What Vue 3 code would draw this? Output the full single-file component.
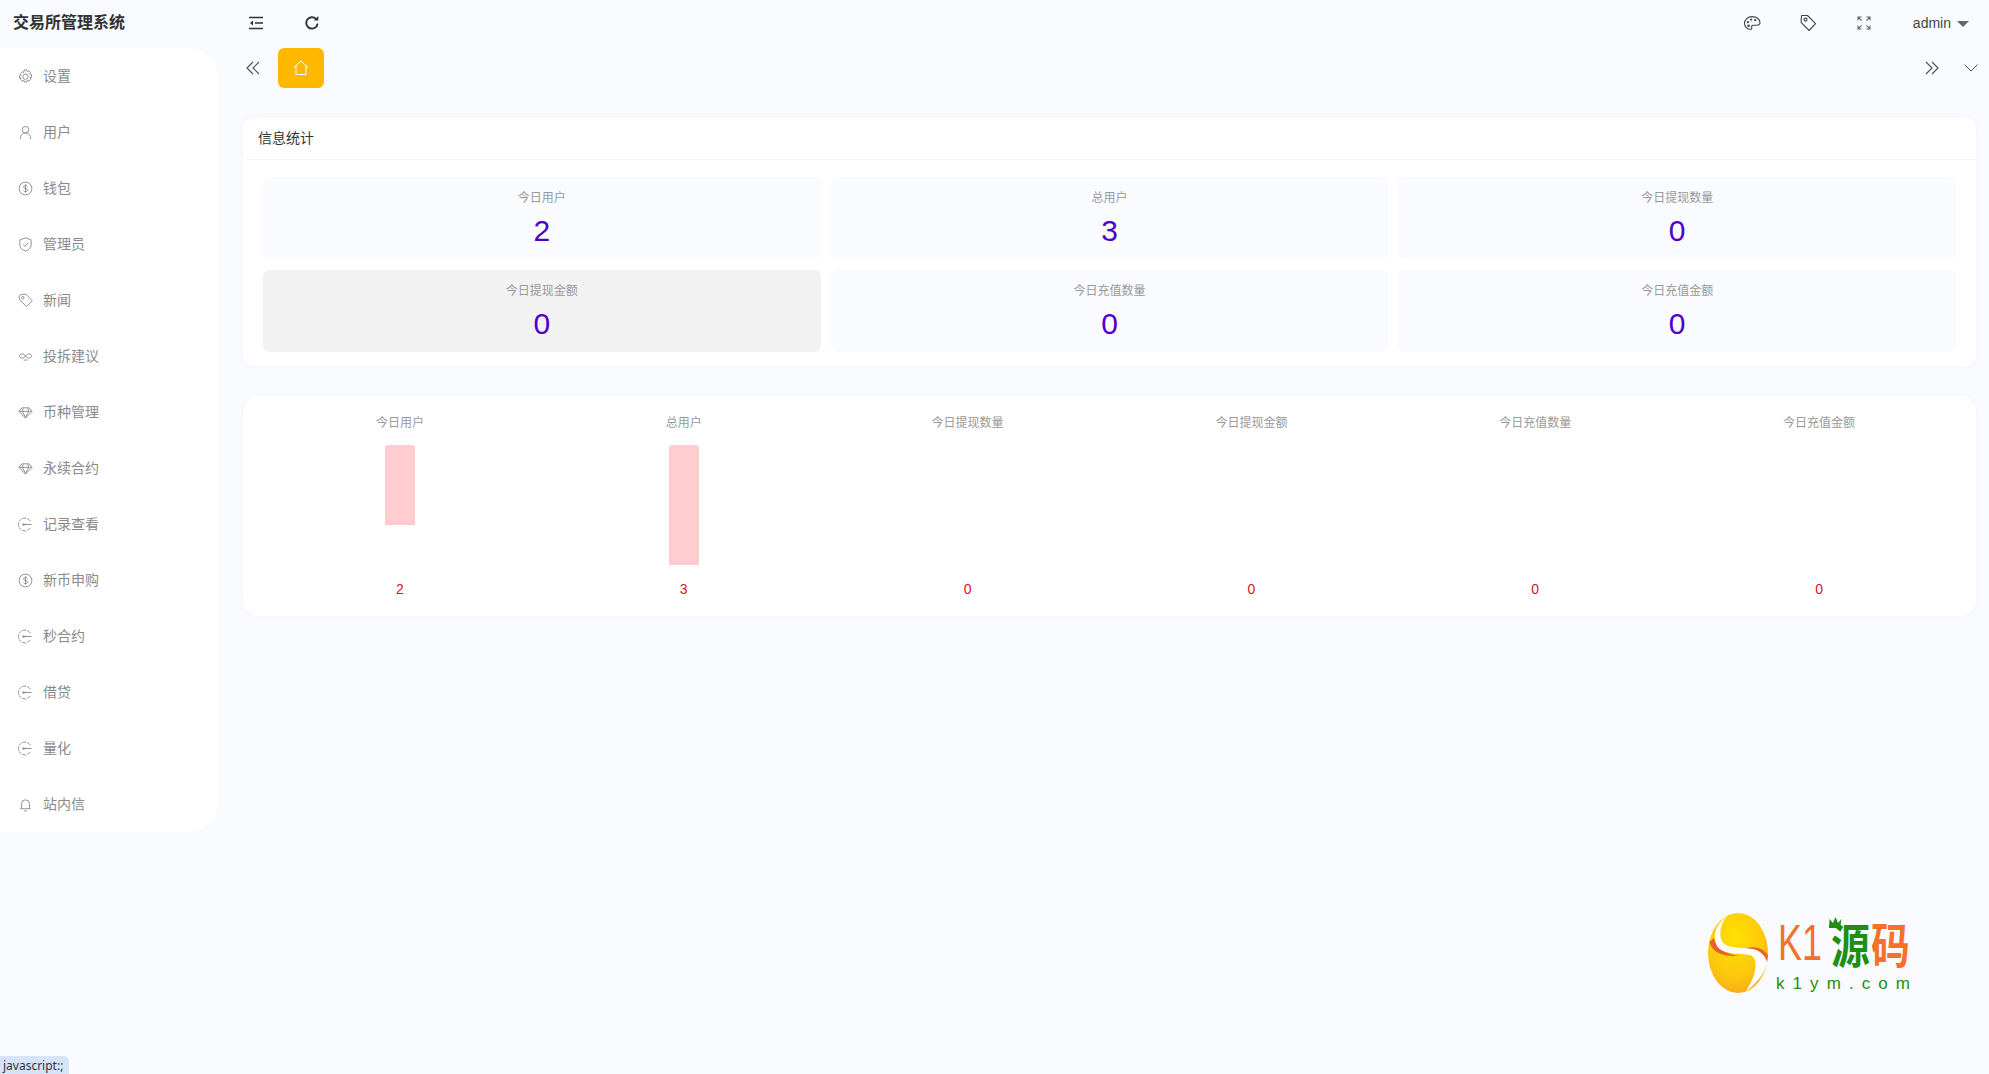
<script setup>
const menu = [
  { name: "设置", icon: "gear" },
  { name: "用户", icon: "user" },
  { name: "钱包", icon: "dollar" },
  { name: "管理员", icon: "shield" },
  { name: "新闻", icon: "tag" },
  { name: "投拆建议", icon: "link" },
  { name: "币种管理", icon: "diamond" },
  { name: "永续合约", icon: "diamond" },
  { name: "记录查看", icon: "login" },
  { name: "新币申购", icon: "dollar" },
  { name: "秒合约", icon: "login" },
  { name: "借贷", icon: "login" },
  { name: "量化", icon: "login" },
  { name: "站内信", icon: "bell" }
];

const tiles = [
  { label: "今日用户", value: 2 },
  { label: "总用户", value: 3 },
  { label: "今日提现数量", value: 0 },
  { label: "今日提现金额", value: 0, active: true },
  { label: "今日充值数量", value: 0 },
  { label: "今日充值金额", value: 0 }
];

// 柱子高度按数值换算，最大值 3 对应 120px
const barHeight = (value) => `${value * 40}px`;
</script>

<template>
  <div class="page">
    <header class="topbar">
      <div class="brand">交易所管理系统</div>
      <div class="top-left">
        <span class="top-btn">
          <svg width="16" height="16" viewBox="0 0 16 16" fill="none" stroke="#333" stroke-width="1.5">
            <path d="M1 2.5h14M7 8h8M1 13.5h14" />
            <path d="M5 5.6 2 8l3 2.4z" fill="#333" stroke="none" />
          </svg>
        </span>
        <span class="top-btn">
          <svg width="16" height="16" viewBox="0 0 16 16" fill="none" stroke="#333" stroke-width="1.9">
            <path d="M13.6 8.6A5.7 5.7 0 1 1 12 3.9" />
            <path d="M14.3 0.9v4.6H9.7z" fill="#333" stroke="none" />
          </svg>
        </span>
      </div>
      <div class="top-right">
        <span class="top-btn">
          <svg width="18" height="18" viewBox="0 0 18 18" fill="none" stroke="#444" stroke-width="1.1">
            <path d="M9 2.6C4.8 2.6 1.5 5.6 1.5 9.3c0 3.4 2.8 6 6 6 1.3 0 1.6-.9 1.2-1.9-.5-1.2.2-2.2 1.6-2.2h3.4c1.9 0 3.3-1 3.3-2.6C17 4.9 13.400 2.600 9 2.600z" />
            <circle cx="5" cy="8.200" r="1.100" fill="#444" stroke="none" />
            <circle cx="8.200" cy="5.600" r="1.100" fill="#444" stroke="none" />
            <circle cx="12.200" cy="6.200" r="1.100" fill="#444" stroke="none" />
            <circle cx="5.600" cy="11.800" r="1.300" fill="#444" stroke="none" />
          </svg>
        </span>
        <span class="top-btn">
          <svg width="18" height="18" viewBox="0 0 18 18" fill="none" stroke="#444" stroke-width="1.1">
            <path d="M2.500 1.500h6l8 8.200-6.400 6.800-8-8.200z" stroke-linejoin="round" />
            <circle cx="6.500" cy="5.600" r="1.500" />
          </svg>
        </span>
        <span class="top-btn">
          <svg width="14" height="14" viewBox="0 0 14 14" fill="none" stroke="#666" stroke-width="1.1">
            <path d="M1 4.500V1h3.500M1 1l3.600 3.600M13 4.500V1H9.500M13 1 9.400 4.600M1 9.500V13h3.500M1 13l3.600-3.600M13 9.500V13H9.500M13 13 9.400 9.400" />
          </svg>
        </span>
        <span class="user">admin<i class="caret"></i></span>
      </div>
    </header>

    <div class="body">
      <aside class="sidebar">
        <div v-for="item in menu" :key="item.name" class="menu-item">
          <svg class="menu-icon" width="15" height="15" viewBox="0 0 16 16" fill="none" stroke="#8c8c8c" stroke-width="1">
            <template v-if="item.icon === 'gear'">
              <path d="M6.600 1h2.800l.5 1.800 1.600-.9 2 2-.9 1.600 1.800.5v2.800l-1.800.5.9 1.600-2 2-1.600-.9-.5 1.800H6.600l-.5-1.800-1.600.9-2-2 .9-1.600L1.600 9.800V7l1.800-.5-.9-1.600 2-2 1.600.9z" stroke-linejoin="round" />
              <circle cx="8" cy="8.200" r="2.800" />
            </template>
            <template v-else-if="item.icon === 'user'">
              <circle cx="8" cy="5" r="3.500" />
              <path d="M2.500 15c0-3.800 2-6.500 5.500-6.500s5.500 2.700 5.500 6.500" />
            </template>
            <template v-else-if="item.icon === 'dollar'">
              <circle cx="8" cy="8" r="6.800" />
              <path d="M10 5.800C9.600 5 8.900 4.700 8 4.700c-1.200 0-2 .6-2 1.600 0 2.300 4.100 1.200 4.100 3.500 0 1-.9 1.600-2.100 1.600-1 0-1.800-.4-2.200-1.300M8 3.500v9" />
            </template>
            <template v-else-if="item.icon === 'shield'">
              <path d="M8 1 14 3v6c0 3-3 5-6 6-3-1-6-3-6-6V3z" stroke-linejoin="round" />
              <path d="m5.200 7.800 2.100 2 3.500-3.600" />
            </template>
            <template v-else-if="item.icon === 'tag'">
              <path d="M1 3.500 3.500 1.500l5-.2 6.700 6.900-6 6.300L2 7.700z" stroke-linejoin="round" />
              <circle cx="5.200" cy="5" r="1.300" />
            </template>
            <template v-else-if="item.icon === 'link'">
              <path d="M8 7.500C6.800 5.800 5.600 5.300 4.300 5.300 2.800 5.300 1.500 6.300 1.500 7.500s1.300 2.200 2.800 2.200c1.300 0 2.500-.5 3.700-2.200 1.200-1.700 2.400-2.200 3.700-2.200 1.500 0 2.800 1 2.800 2.200s-1.300 2.200-2.800 2.200c-1.300 0-2.500-.5-3.700-2.200" />
              <path d="M6 11.800h4" />
            </template>
            <template v-else-if="item.icon === 'diamond'">
              <path d="M4.200 3h7.600L15 6.800 8 14 1 6.800z" stroke-linejoin="round" />
              <path d="M1.500 6.800h13M5.500 3.500l-.8 3.300L8 13.500l3.300-6.700-.8-3.300" />
            </template>
            <template v-else-if="item.icon === 'login'">
              <path d="M13 4.300A6.800 6.800 0 1 0 13 11.700" stroke-dasharray="4 1" />
              <path d="M6 8h8.500" />
              <circle cx="6" cy="8" r="1.300" fill="#8c8c8c" stroke="none" />
            </template>
            <template v-else>
              <path d="M2.500 12.500h11M3.800 12.500V7.200a4.200 4.200 0 0 1 8.400 0v5.300M6.500 14.800h3" />
            </template>
          </svg>
          <span>{{ item.name }}</span>
        </div>
      </aside>

      <main class="content">
        <div class="tabs">
          <span class="tab-arrow">
            <svg width="16" height="16" viewBox="0 0 16 16" fill="none" stroke="#555" stroke-width="1.200">
              <path d="M8 2 2 8l6 6M14 2 8 8l6 6" />
            </svg>
          </span>
          <span class="home-tab">
            <svg width="16" height="16" viewBox="0 0 16 16" fill="none" stroke="#fff" stroke-width="1">
              <path d="M.8 7.600 8 1l7.200 6.600M3 6.200v8.300h10V6.200" />
            </svg>
          </span>
          <span class="tab-space"></span>
          <span class="tab-arrow">
            <svg width="16" height="16" viewBox="0 0 16 16" fill="none" stroke="#555" stroke-width="1.200">
              <path d="m2 2 6 6-6 6M8 2l6 6-6 6" />
            </svg>
          </span>
          <span class="tab-arrow tab-down">
            <svg width="16" height="16" viewBox="0 0 16 16" fill="none" stroke="#555" stroke-width="1">
              <path d="m1.500 4.500 6.500 6.500 6.500-6.500" />
            </svg>
          </span>
        </div>

        <section class="card">
          <div class="card-head">信息统计</div>
          <div class="card-body">
            <div
              v-for="tile in tiles"
              :key="tile.label"
              class="tile"
              :class="{ active: tile.active }"
            >
              <div class="tile-label">{{ tile.label }}</div>
              <div class="tile-value">{{ tile.value }}</div>
            </div>
          </div>
        </section>

        <section class="card chart">
          <div v-for="tile in tiles" :key="tile.label" class="chart-col">
            <div class="chart-label">{{ tile.label }}</div>
            <div class="chart-track">
              <div class="chart-bar" :style="{ height: barHeight(tile.value) }"></div>
            </div>
            <div class="chart-value">{{ tile.value }}</div>
          </div>
        </section>
      </main>
    </div>

    <svg class="watermark" width="205" height="90" viewBox="0 -10 205 90">
      <defs>
        <radialGradient id="egg" cx="0.450" cy="0.300" r="0.800">
          <stop offset="0" stop-color="#ffe100" />
          <stop offset="0.600" stop-color="#fdc80c" />
          <stop offset="1" stop-color="#f7a516" />
        </radialGradient>
      </defs>
      <ellipse cx="30" cy="40" rx="30" ry="40" fill="url(#egg)" />
      <path d="M1.500 29C4 38 12 44 32 43 18 41 9 37 6 25z" fill="#ee5f2a" />
      <path d="M19 3C7 12 4 24 9 33c6 9 23 7 33 9 8 2 8 18-4 36 12-8 22-22 21-32-2-9-11-11-23-11-12 0-21-2-23-9-2-8 1-17 6-23z" fill="#fff" />
      <path d="M38 35.500c10-.5 18 4 21 13l1-6c-4-7-13-10-22-7z" fill="#ee5f2a" />
      <text class="logo-k" transform="translate(70 47) scale(.9 1.27)">K1</text>
      <text class="logo-cn logo-green" transform="translate(123 50) scale(.97 1.18)">源</text>
      <text class="logo-cn logo-orange" transform="translate(163 50) scale(.97 1.18)">码</text>
      <text x="68" y="76" class="logo-url" textLength="134">k1ym.com</text>
      <path d="M121 15h11l1.500-9-3.500 4-2.500-6-2.500 6-3.500-4z" fill="#1e8f10" />
    </svg>

    <div class="status">javascript:;</div>
  </div>
</template>

<style scoped>
.page {
  position: relative;
  height: 1074px;
  overflow: hidden;
  background: #f9fbff;
  font-family: "Liberation Sans", "Noto Sans CJK SC", sans-serif;
  color: #333;
}

.topbar {
  display: flex;
  align-items: center;
  height: 48px;
  padding-bottom: 2px;
  box-sizing: border-box;
}

.brand {
  width: 228px;
  padding: 0 0 5px 13px;
  box-sizing: border-box;
  font-size: 16px;
  font-weight: 700;
}

.top-left {
  display: flex;
  flex: 1;
}

.top-right {
  display: flex;
  align-items: center;
  padding-right: 20px;
}

.top-btn {
  display: flex;
  align-items: center;
  justify-content: center;
  width: 56px;
  height: 20px;
}

.user {
  display: flex;
  align-items: center;
  margin-left: 21px;
  font-size: 14px;
  color: #444;
}

.caret {
  width: 0;
  height: 0;
  margin: 2px 0 0 6px;
  border-left: 6px solid transparent;
  border-right: 6px solid transparent;
  border-top: 6px solid #666;
}

.body {
  display: flex;
  align-items: flex-start;
}

.sidebar {
  width: 218px;
  flex-shrink: 0;
  background: #fff;
  border-radius: 0 30px 30px 0;
}

.menu-item {
  display: flex;
  align-items: center;
  height: 56px;
  padding: 0 0 2px 18px;
  box-sizing: border-box;
  font-size: 14px;
  color: #8a8a8a;
}

.menu-icon {
  margin: 3px 10px 0 0;
  flex-shrink: 0;
}

.content {
  flex: 1;
  min-width: 0;
  padding: 0 13px 0 25px;
}

.tabs {
  display: flex;
  align-items: center;
  height: 40px;
  margin-bottom: 30px;
}

.tab-arrow {
  display: flex;
  width: 16px;
  margin-left: 2px;
}

.home-tab {
  display: flex;
  align-items: center;
  justify-content: center;
  width: 46px;
  height: 40px;
  margin-left: 17px;
  background: #ffb800;
  border-radius: 6px;
}

.tab-space {
  flex: 1;
}

.tab-down {
  margin-left: 23px;
  margin-right: -3px;
}

.card {
  background: #fff;
  border-radius: 10px;
  box-shadow: 0 0 6px rgba(230, 236, 248, 0.35);
}

.card-head {
  height: 42px;
  line-height: 41px;
  padding-left: 15px;
  box-sizing: border-box;
  border-bottom: 1px solid #f6f7fa;
  font-size: 14px;
  color: #333;
}

.card-body {
  display: grid;
  grid-template-columns: repeat(3, 1fr);
  gap: 11px 10px;
  padding: 17px 20px 14px;
}

.tile {
  height: 82px;
  padding-top: 13px;
  box-sizing: border-box;
  text-align: center;
  background: #f9fbff;
  border-radius: 6px;
}

.tile.active {
  background: #f2f2f2;
}

.tile-label {
  font-size: 12px;
  line-height: 16px;
  color: #999;
}

.tile-value {
  margin-top: 5px;
  font-size: 30px;
  line-height: 40px;
  color: #4f00c9;
}

.chart {
  display: grid;
  grid-template-columns: repeat(6, 1fr);
  margin-top: 30px;
  padding: 19px 15px 0;
  height: 220px;
  box-sizing: border-box;
  border-radius: 16px;
}

.chart-col {
  display: flex;
  flex-direction: column;
  align-items: center;
}

.chart-label {
  font-size: 12px;
  line-height: 16px;
  color: #999;
}

.chart-track {
  height: 120px;
  margin-top: 14px;
}

.chart-bar {
  width: 30px;
  background: #ffcdd0;
  border-radius: 3px 3px 0 0;
}

.chart-value {
  margin-top: 16px;
  font-size: 14px;
  line-height: 16px;
  color: #d9121f;
}

.watermark {
  position: absolute;
  left: 1708px;
  top: 903px;
}

.logo-k {
  font-family: "Liberation Sans", sans-serif;
  font-size: 40px;
  fill: #f5702a;
}

.logo-cn {
  font-family: "Noto Sans CJK SC", sans-serif;
  font-size: 40px;
  font-weight: 700;
}

.logo-green {
  fill: #1e8f10;
}

.logo-orange {
  fill: #f5702a;
}

.logo-url {
  font-family: "Liberation Sans", sans-serif;
  font-size: 17px;
  fill: #1e8f10;
}

.status {
  position: absolute;
  left: 0;
  bottom: 0;
  height: 18px;
  padding: 0 6px 0 3px;
  line-height: 19px;
  font-family: "Noto Sans", sans-serif;
  font-size: 12px;
  color: #333;
  background: #d6e4fa;
  border-top-right-radius: 5px;
}
</style>
